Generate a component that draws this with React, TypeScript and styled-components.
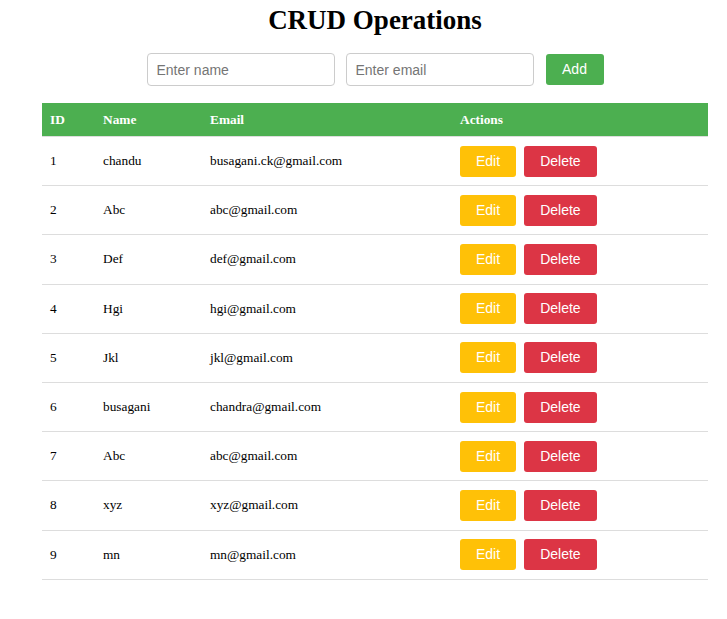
import React from "react";
import styled, { createGlobalStyle } from "styled-components";

const Global = createGlobalStyle`
  html, body { margin: 0; padding: 0; background: #fff; }
  body { font-family: "Liberation Serif", "Times New Roman", serif; color: #000; }
`;

const Page = styled.div`
  padding: 0 19px 0 42px;
`;

const Title = styled.h1`
  margin: 0;
  padding-top: 4px;
  text-align: center;
  font-size: 27px;
  line-height: 32px;
  font-weight: bold;
`;

const Form = styled.div`
  display: flex;
  justify-content: center;
  align-items: center;
  gap: 11px;
  margin-top: 17px;
`;

const Input = styled.input`
  box-sizing: border-box;
  width: 188px;
  height: 33px;
  border: 1px solid #ccc;
  border-radius: 4px;
  padding: 0 9px;
  font-family: "Liberation Sans", Arial, sans-serif;
  font-size: 14px;
  &::placeholder { color: #757575; }
`;

const Button = styled.button<{ $bg: string }>`
  box-sizing: border-box;
  border: none;
  border-radius: 3px;
  background: ${(p) => p.$bg};
  color: #fff;
  font-family: "Liberation Sans", Arial, sans-serif;
  font-size: 14px;
  line-height: 17px;
  padding: 7px 16px;
  cursor: pointer;
`;

const AddButton = styled(Button)`
  margin-left: 1px;
  height: 31px;
  width: 58px;
  padding: 0;
`;

const Table = styled.table`
  width: 666px;
  border-collapse: collapse;
  margin-top: 17px;
  font-size: 13.33px;
`;

const Th = styled.th<{ $w: number }>`
  width: ${(p) => p.$w}px;
  background: #4caf50;
  color: #fff;
  text-align: left;
  font-weight: bold;
  padding: 7.5px 8px 8.5px;
  height: 17px;
  line-height: 17px;
  border-bottom: 1px solid #ddd;
`;

const Td = styled.td`
  padding: 8.6px 8px;
  border-bottom: 1px solid #ddd;
  vertical-align: middle;
`;

const Actions = styled.div`
  display: flex;
  gap: 8px;
`;

const users = [
  [1, "chandu", "busagani.ck@gmail.com"],
  [2, "Abc", "abc@gmail.com"],
  [3, "Def", "def@gmail.com"],
  [4, "Hgi", "hgi@gmail.com"],
  [5, "Jkl", "jkl@gmail.com"],
  [6, "busagani", "chandra@gmail.com"],
  [7, "Abc", "abc@gmail.com"],
  [8, "xyz", "xyz@gmail.com"],
  [9, "mn", "mn@gmail.com"],
];

export default function App() {
  return (
    <Page>
      <Global />
      <Title>CRUD Operations</Title>
      <Form>
        <Input placeholder="Enter name" />
        <Input placeholder="Enter email" />
        <AddButton $bg="#4caf50">Add</AddButton>
      </Form>
      <Table>
        <thead>
          <tr>
            <Th $w={37}>ID</Th>
            <Th $w={91}>Name</Th>
            <Th $w={234}>Email</Th>
            <Th $w={240}>Actions</Th>
          </tr>
        </thead>
        <tbody>
          {users.map(([id, name, email]) => (
            <tr key={id}>
              <Td>{id}</Td>
              <Td>{name}</Td>
              <Td>{email}</Td>
              <Td>
                <Actions>
                  <Button $bg="#ffc107">Edit</Button>
                  <Button $bg="#dc3545">Delete</Button>
                </Actions>
              </Td>
            </tr>
          ))}
        </tbody>
      </Table>
    </Page>
  );
}
